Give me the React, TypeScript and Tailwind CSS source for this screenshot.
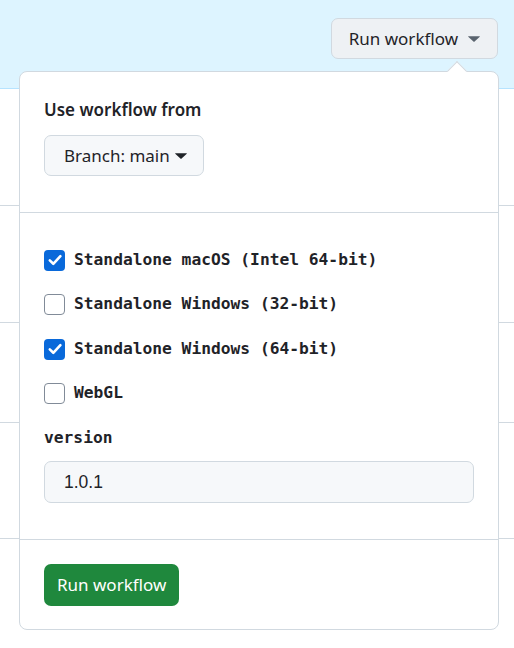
import React from 'react';

const sans = { fontFamily: '"Noto Sans", "Liberation Sans", sans-serif' };

const Caret = ({ className = '' }: { className?: string }) => (
  <svg viewBox="0 0 12 6" className={className} fill="currentColor" aria-hidden>
    <path d="M0.4 0.2h11.2a.3.3 0 0 1 .2.5L6.3 5.8a.45.45 0 0 1-.6 0L.2.7a.3.3 0 0 1 .2-.5Z" />
  </svg>
);

const Check = ({ checked, label }: { checked: boolean; label: string }) => (
  <label className="flex items-center h-[24px] gap-[9px]">
    {checked ? (
      <span className="w-[21px] h-[21px] rounded-[4px] bg-[#0969da] flex items-center justify-center">
        <svg viewBox="0 0 20 20" className="w-[20px] h-[20px]" fill="none" stroke="white" strokeWidth="2.6" strokeLinecap="round" strokeLinejoin="round">
          <path d="M4.8 10.4 8.3 13.8 15.4 6.2" />
        </svg>
      </span>
    ) : (
      <span className="w-[21px] h-[21px] rounded-[4px] border border-[#818b98] bg-white" />
    )}
    <span className="font-['DejaVu_Sans_Mono',monospace] font-bold text-[16.25px] text-[#1f2328]">{label}</span>
  </label>
);

export default function App() {
  return (
    <div className="relative w-[514px] h-[648px] bg-white overflow-hidden text-[#1f2328]" style={sans}>
      {/* page behind the overlay */}
      <div className="h-[89px] bg-[#ddf4ff] border-b border-[#b6e3ff] flex justify-end items-start pt-[18px] pr-[16px]">
        <button className="h-[41px] flex items-center pl-[17px] pr-[17px] gap-[10px] rounded-[7px] border border-[#d1d9e0] bg-[#eef1f4] text-[17px] text-[#1f2328]">
          Run workflow
          <Caret className="w-[12px] h-[6px] text-[#59636e]" />
        </button>
      </div>
      <div className="h-[117px] border-b border-[#d1d9e0]" />
      <div className="h-[117px] border-b border-[#d1d9e0]" />
      <div className="h-[100px] border-b border-[#d1d9e0]" />
      <div className="h-[116px] border-b border-[#d1d9e0]" />

      {/* dropdown overlay */}
      <div className="absolute left-[19px] top-[71px] w-[480px] bg-white border border-[#d1d9e0] rounded-[8px]">
        <div className="absolute -top-[8px] left-[430px] w-[14px] h-[14px] rotate-45 bg-white border-l border-t border-[#d1d9e0]" />
        <div className="relative px-[24px] pt-[26px] pb-[36px] border-b border-[#d1d9e0]">
          <div className="text-[17px] leading-[24px] font-semibold">Use workflow from</div>
          <button className="mt-[13px] h-[41px] flex items-center gap-[5px] pl-[19px] pr-[16px] rounded-[7px] border border-[#d1d9e0] bg-[#f6f8fa] text-[17px]">
            Branch: main
            <Caret className="w-[12px] h-[6px] text-[#1f2328]" />
          </button>
        </div>
        <div className="px-[24px] pt-[35px] pb-[36px] border-b border-[#d1d9e0]">
          <div className="flex flex-col gap-[20.5px]">
            <Check checked label="Standalone macOS (Intel 64-bit)" />
            <Check checked={false} label="Standalone Windows (32-bit)" />
            <Check checked label="Standalone Windows (64-bit)" />
            <Check checked={false} label="WebGL" />
          </div>
          <div className="mt-[20.5px] h-[24px] leading-[24px] font-['DejaVu_Sans_Mono',monospace] font-bold text-[16.25px]">version</div>
          <div className="mt-[11px] h-[42px] flex items-center px-[19px] rounded-[7px] border border-[#d1d9e0] bg-[#f6f8fa] text-[17.5px] w-[430px] font-['Liberation_Sans',sans-serif]">
            1.0.1
          </div>
        </div>
        <div className="px-[24px] pt-[24px] pb-[23px]">
          <button className="h-[42px] px-[13px] rounded-[7px] bg-[#1f883d] text-white text-[17px] flex items-center">
            Run workflow
          </button>
        </div>
      </div>
    </div>
  );
}
